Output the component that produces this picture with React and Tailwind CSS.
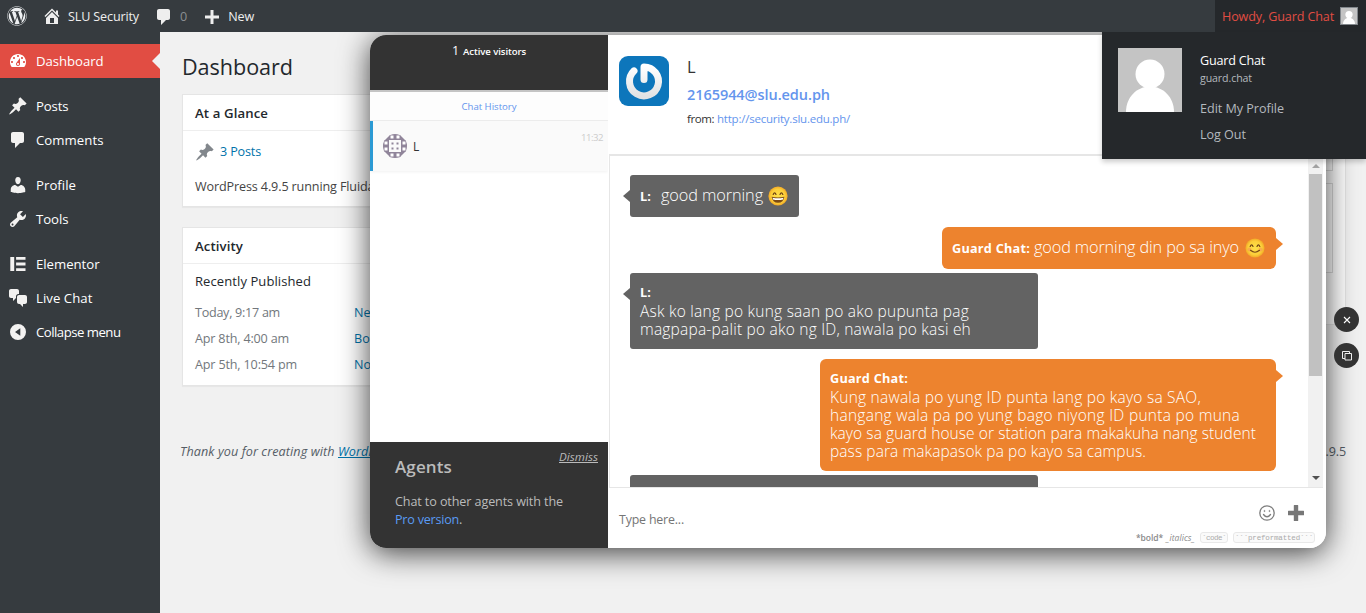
import { useLayoutEffect, useRef } from "react";
import { FaWordpress } from "react-icons/fa";

/* Text run set to a fixed advance width through tracking. */
function T({ w, className = "", children }) {
  const ref = useRef(null);
  useLayoutEffect(() => {
    const el = ref.current;
    el.style.letterSpacing = "0px";
    const natural = el.getBoundingClientRect().width;
    el.style.letterSpacing = (w - natural) / String(children).length + "px";
  }, [w, children]);
  return (
    <span ref={ref} className={"inline-block whitespace-pre " + className}>
      {children}
    </span>
  );
}

const paths = {
  dashboard:
    "M3.76 16h12.48c1.1-1.37 1.76-3.11 1.76-5 0-4.42-3.58-8-8-8s-8 3.58-8 8c0 1.89.66 3.63 1.76 5zM10 4c.55 0 1 .45 1 1s-.45 1-1 1-1-.45-1-1 .45-1 1-1zM6 6c.55 0 1 .45 1 1s-.45 1-1 1-1-.45-1-1 .45-1 1-1zm8 0c.55 0 1 .45 1 1s-.45 1-1 1-1-.45-1-1 .45-1 1-1zm-5.37 5.55L12 7v6c0 1.1-.9 2-2 2s-2-.9-2-2c0-.57.24-1.08.63-1.45zM4 10c.55 0 1 .45 1 1s-.45 1-1 1-1-.45-1-1 .45-1 1-1zm12 0c.55 0 1 .45 1 1s-.45 1-1 1-1-.45-1-1 .45-1 1-1zm-5 3c0-.55-.45-1-1-1s-1 .45-1 1 .45 1 1 1 1-.45 1-1z",
  pin: "M10.44 3.02l1.82-1.82 6.36 6.35-1.83 1.82c-1.05-.68-2.48-.57-3.41.36l-.75.75c-.92.93-1.04 2.35-.35 3.41l-1.83 1.82-2.41-2.41-2.8 2.79c-.42.42-3.38 2.71-3.8 2.29s1.86-3.39 2.28-3.81l2.79-2.79L4.1 9.36l1.83-1.82c1.05.69 2.48.57 3.4-.36l.75-.75c.93-.92 1.05-2.35.36-3.41z",
  comment:
    "M5 2h9c1.1 0 2 .9 2 2v7c0 1.1-.9 2-2 2h-2l-5 5v-5H5c-1.1 0-2-.9-2-2V4c0-1.1.9-2 2-2z",
  user: "M10 9.25c-2.27 0-2.73-3.44-2.73-3.44C7 4.02 7.82 2 9.97 2c2.16 0 2.98 2.02 2.71 3.81 0 0-.41 3.44-2.68 3.44zm0 2.57L12.72 10c2.39 0 4.52 2.33 4.52 4.53v2.49s-3.65 1.13-7.24 1.13c-3.65 0-7.24-1.13-7.24-1.13v-2.49c0-2.25 1.94-4.48 4.47-4.48z",
  wrench:
    "M16.68 9.77c-1.34 1.34-3.3 1.67-4.95.99l-5.41 6.52c-.99.99-2.59.99-3.58 0s-.99-2.59 0-3.57l6.52-5.42c-.68-1.65-.35-3.61.99-4.95 1.28-1.28 3.12-1.62 4.72-1.06l-2.89 2.89 2.82 2.82 2.86-2.87c.53 1.58.18 3.39-1.08 4.65zM3.81 16.21c.4.39 1.04.39 1.43 0 .4-.4.4-1.04 0-1.43-.39-.4-1.03-.4-1.43 0-.39.39-.39 1.03 0 1.43z",
  elementor: "M2.3 3h3.9v14H2.3zM8.1 3h9.4v2.8H8.1zM8.1 8.6h9.4v2.8H8.1zM8.1 14.2h9.4V17H8.1z",
  chat: "M11 6h-.82C9.07 6 8 7.2 8 8.16V10l-3 3v-3H3c-1.1 0-2-.9-2-2V3c0-1.1.9-2 2-2h6c1.1 0 2 .9 2 2v3zm0 1h6c1.1 0 2 .9 2 2v5c0 1.1-.9 2-2 2h-2v3l-3-3h-1c-1.1 0-2-.9-2-2V9c0-1.1.9-2 2-2z",
  collapse: "M10 2a8 8 0 1 0 0 16 8 8 0 0 0 0-16zM12.3 6.3v7.4L7 10z",
  home: "M16 8.5l1.53 1.53-1.06 1.06L10 4.6l-6.47 6.49-1.06-1.06L10 2.5l4 4v-2h2v4zm-6-2.46l6 5.99V18H4v-5.97zM12 17v-5H8v5h4z",
  plus: "M17 8.5v3h-5.5V17h-3v-5.5H3v-3h5.500V3h3v5.500z",
};

function Icon({ name, className = "" }) {
  return (
    <svg viewBox="0 0 20 20" className={"size-5 shrink-0 " + className} fill="currentColor" fillRule="evenodd">
      <path d={paths[name]} />
    </svg>
  );
}

function Person({ className }) {
  return (
    <svg viewBox="0 0 64 64" className={className}>
      <rect width="64" height="64" fill="#c4c4c4" />
      <circle cx="32" cy="26" r="14.500" fill="#fff" />
      <path d="M8 64C8 49 19 38.500 32 38.500S56 49 56 64z" fill="#fff" />
    </svg>
  );
}

function Emoji({ grin }) {
  return (
    <svg viewBox="0 0 20 20" className="size-5 shrink-0">
      <defs>
        <radialGradient id={grin ? "ga" : "gb"} cx="50%" cy="50%" r="55%">
          <stop offset="0" stopColor="#fde04a" />
          <stop offset=".65" stopColor="#fccf3a" />
          <stop offset="1" stopColor="#ee9a1f" />
        </radialGradient>
      </defs>
      <circle cx="10" cy="10" r="9.600" fill={grin ? "url(#ga)" : "url(#gb)"} />
      {!grin && <circle cx="4.500" cy="11.500" r="2" fill="#f58b5a" opacity=".5" />}
      {!grin && <circle cx="15.500" cy="11.500" r="2" fill="#f58b5a" opacity=".5" />}
      <path d="M5.200 8.500Q6.600 5.200 8 8.500M12 8.500Q13.400 5.200 14.800 8.500" fill="none" stroke="#6b3f14" strokeWidth="1.200" strokeLinecap="round" />
      {grin ? (
        <g>
          <path d="M3.600 10.800Q10 12 16.400 10.800Q15.500 16.800 10 16.800T3.600 10.800z" fill="#7a4a17" />
          <path d="M4.600 11.700Q10 12.800 15.400 11.700L15 13.500Q10 14.500 5 13.500z" fill="#fff" />
        </g>
      ) : (
        <path d="M5.500 12.300Q10 16.200 14.500 12.300" fill="none" stroke="#7a4a17" strokeWidth="1.200" strokeLinecap="round" />
      )}
    </svg>
  );
}

function MenuItem({ icon, label, w, active }) {
  return (
    <div className={"relative flex h-[34px] items-center pl-2 text-[13.200px] text-white " + (active ? "bg-[#e14d43]" : "")}>
      <Icon name={icon} className={active ? "" : "text-[#f3f2f1]"} />
      <T w={w} className="ml-2 leading-[18px]">{label}</T>
      {active && (
        <span className="absolute right-0 top-[9px] border-y-8 border-r-8 border-y-transparent border-r-[#f1f1f1]" />
      )}
    </div>
  );
}

function Sidebar() {
  return (
    <nav className="w-40 shrink-0 bg-[#363b3f] pt-3">
      <MenuItem icon="dashboard" label="Dashboard" w={67.5} active />
      <div className="h-[11px]" />
      <MenuItem icon="pin" label="Posts" w={32.500} />
      <MenuItem icon="comment" label="Comments" w={67.5} />
      <div className="h-[11px]" />
      <MenuItem icon="user" label="Profile" w={40} />
      <MenuItem icon="wrench" label="Tools" w={32.500} />
      <div className="h-[11px]" />
      <MenuItem icon="elementor" label="Elementor" w={63.5} />
      <MenuItem icon="chat" label="Live Chat" w={56.5} />
      <MenuItem icon="collapse" label="Collapse menu" w={84.5} />
    </nav>
  );
}

function AdminBar() {
  return (
    <header className="flex h-8 items-center bg-[#363b3f] text-[12.600px] text-[#eee]">
      <FaWordpress className="ml-[7px] size-5 text-[#eef0f2]" />
      <Icon name="home" className="ml-[15px]" />
      <T w={71} className="ml-[6px] mt-[2px]">SLU Security</T>
      <Icon name="comment" className="ml-[15px] mt-px" />
      <span className="ml-[6px] mt-[2px] text-[#8b8f92]">0</span>
      <Icon name="plus" className="ml-[15px] mt-px" />
      <T w={26} className="ml-[6px] mt-[2px]">New</T>
      <div className="ml-auto flex h-8 w-[151px] items-center bg-[#25282b] pl-[7px] text-[#e14d43]">
        <T w={112} className="mt-[2px]">Howdy, Guard Chat</T>
        <Person className="ml-[6px] size-[18px] border border-[#82878c]" />
      </div>
    </header>
  );
}

function UserMenu() {
  return (
    <div className="absolute right-0 top-8 z-20 flex h-[127px] w-[264px] bg-[#25282b] pl-4 pt-4 shadow-[0_3px_5px_rgba(0,0,0,0.2)]">
      <Person className="size-16" />
      <div className="ml-[18px] flex flex-col items-start text-[12.600px] text-[#b4b9be]">
        <T w={65} className="mt-[4px] leading-[18px] text-white">Guard Chat</T>
        <T w={52} className="text-[10.600px] leading-[17px]">guard.chat</T>
        <T w={84} className="mt-[9px] leading-[26px]">Edit My Profile</T>
        <T w={46} className="leading-[26px]">Log Out</T>
      </div>
    </div>
  );
}

function Panel({ title, w, children, className }) {
  return (
    <section className={"border border-[#e5e5e5] bg-white shadow-[0_1px_1px_rgba(0,0,0,0.04)] " + className}>
      <h2 className="flex h-9 items-center border-b border-[#eee] pl-3 pt-[2px] text-[13.200px] font-semibold text-[#23282d]">
        <T w={w}>{title}</T>
      </h2>
      {children}
    </section>
  );
}

const activity = [
  ["Today, 9:17 am", 85, "New"],
  ["Apr 8th, 4:00 am", 94, "Bomb"],
  ["Apr 5th, 10:54 pm", 102, "No"],
];

function Dashboard() {
  return (
    <main className="relative flex-1 bg-[#f1f1f1] pl-[20px] pr-5">
      <h1 className="pl-[2px] pt-[19px] text-[21.600px] leading-[32px] text-[#23282d]">
        <T w={111}>Dashboard</T>
      </h1>
      <div className="flex gap-4 pl-[2px] pt-[11px]">
        <div className="w-[560px] shrink-0">
          <Panel title="At a Glance" w={73} className="h-[113px]">
            <div className="flex items-center pt-[11px] text-[12.600px] text-[#0073aa]">
              <Icon name="pin" className="ml-[12px] text-[#82878c]" />
              <T w={41} className="ml-[5px]">3 Posts</T>
            </div>
            <p className="pl-3 pt-[15px] text-[12.600px] leading-[20px] text-[#444]">
              <T w={220}>WordPress 4.9.5 running Fluida theme</T>
            </p>
          </Panel>
          <Panel title="Activity" w={48} className="mt-5 h-[159px]">
            <h3 className="pl-3 pt-[7px] text-[13px] leading-[20px] text-[#23282d]">
              <T w={116}>Recently Published</T>
            </h3>
            <div className="pl-3 pt-[9px] text-[12.600px] leading-[26px]">
              {activity.map(([when, w, title]) => (
                <div key={when} className="flex">
                  <span className="w-[159px] text-[#72777c]">
                    <T w={w}>{when}</T>
                  </span>
                  <span className="text-[#0073aa]">{title}</span>
                </div>
              ))}
            </div>
          </Panel>
        </div>
        <section className="h-[231px] flex-1 border border-[#e5e5e5] bg-white pr-3 pt-9">
          <div className="h-[40px] rounded-none border border-[#ddd]" />
          <div className="mt-[12px] h-[90px] border border-[#ddd]" />
        </section>
      </div>
      <footer className="absolute inset-x-5 top-[410px] flex justify-between text-[12.600px] leading-5 text-[#555d66]">
        <span className="italic">
          <T w={158}>Thank you for creating with </T>
          <T w={63} className="text-[#0073aa] underline">WordPress.</T>
        </span>
        <T w={74}>Version 4.9.5</T>
      </footer>
    </main>
  );
}

function Identicon() {
  const tiles = [[9, 1], [15, 1], [9, 19], [15, 19], [1, 9], [1, 15], [19, 9], [19, 15]];
  const dots = [[9, 9], [14, 9], [9, 14], [14, 14]];
  return (
    <svg viewBox="0 0 24 24" className="size-6 shrink-0">
      <defs>
        <clipPath id="round"><circle cx="12" cy="12" r="12" /></clipPath>
      </defs>
      <g clipPath="url(#round)" fill="#90859a">
        <path d="M6 0h12v6H6zM6 18h12v6H6zM0 6h6v12H0zM18 6h6v12h-6z" />
        <path d="M2 6l4-4v4zM18 2l4 4h-4zM2 18h4v4zM18 18h4l-4 4z" />
        <g fill="#fff">
          {tiles.map(([x, y]) => (
            <rect key={x + "-" + y} x={x > 1 && x < 19 ? x - 1.500 : x + 0.500} y={y > 1 && y < 19 ? y - 1.500 : y + 0.500} width="3" height="3" />
          ))}
        </g>
        {dots.map(([x, y]) => (
          <rect key={x + "." + y} x={x - 0.500} y={y - 0.500} width="2" height="2" />
        ))}
      </g>
    </svg>
  );
}

function VisitorList() {
  return (
    <aside className="flex w-[238px] shrink-0 flex-col bg-white">
      <div className="flex h-[55px] items-baseline justify-center gap-1 bg-[#333] pt-[7px] text-white">
        <span className="text-[12.500px]">1</span>
        <T w={63} className="text-[9.600px] font-semibold">Active visitors</T>
      </div>
      <div className="h-[2px] bg-[#c4c4c4]" />
      <div className="flex h-[29px] items-center justify-center border-b border-[#eee] bg-[#fdfdfd] pt-[2px] text-[9.600px] text-[#6495ed]">
        <T w={55}>Chat History</T>
      </div>
      <div className="flex h-[50px] items-center border-l-[3px] border-[#2b9ad4] bg-[#fafafa] pr-[5px] shadow-[0_1px_3px_rgba(0,0,0,0.06)]">
        <span className="ml-[10px] flex"><Identicon /></span>
        <span className="ml-[6px] mt-[2px] text-[12px] text-[#333]">L</span>
        <T w={22} className="-mt-[16px] ml-auto text-[9.600px] text-[#ccc]">11:32</T>
      </div>
      <div className="flex-1" />
      <div className="relative h-[106px] bg-[#333] pl-[25px] pt-[14px] text-[#bbb]">
        <h4 className="text-[17px] font-semibold leading-[22px]">
          <T w={57}>Agents</T>
        </h4>
        <div className="absolute right-[10px] top-[6px] text-[11.600px] italic leading-[18px]">
          <T w={39} className="underline">Dismiss</T>
        </div>
        <p className="mt-[15px] text-[12.600px] leading-[18px]">
          <T w={168}>Chat to other agents with the</T>
          <br />
          <T w={64} className="text-[#5a9bf5]">Pro version</T>.
        </p>
      </div>
    </aside>
  );
}

function Gravatar() {
  return (
    <svg viewBox="0 0 50 50" className="size-[50px] shrink-0 rounded-[9px] bg-[#0d76bb]">
      <defs>
        <linearGradient id="ring" x1="0" y1="0" x2="0" y2="1">
          <stop offset="0" stopColor="#fff" />
          <stop offset="1" stopColor="#e2e3e4" />
        </linearGradient>
      </defs>
      <path d="M25 23V10.500A14.500 14.500 0 1 1 15 14.500" transform="translate(0 .4)" fill="none" stroke="url(#ring)" strokeWidth="7" strokeLinecap="round" strokeLinejoin="round" />
    </svg>
  );
}

function Bubble({ mine, inline, name, nameW, lines, className, grin }) {
  return (
    <div
      className={
        "relative shrink-0 p-2.5 font-light leading-[18px] text-white " +
        (inline ? "text-[16.300px] " : "text-[15.500px] ") +
        (mine ? "self-end rounded-[6px] bg-[#ed832e] " : "self-start rounded-[3px] bg-[#636363] ") +
        className
      }
    >
      <span
        className={
          "absolute border-y-[6px] border-y-transparent " +
          (mine ? "-right-[7px] top-[11px] border-l-[7px] border-l-[#ed832e]" : "-left-[7px] top-[15px] border-r-[7px] border-r-[#636363]")
        }
      />
      {inline ? (
        <div className="flex items-center pt-px">
          <T w={nameW} className="text-[12.700px] font-bold">{name}</T>
          <T w={lines[0][1]} className={"-mt-[3px] " + (mine ? "ml-[4px]" : "ml-[10px]")}>{lines[0][0]}</T>
          <span className={mine ? "ml-[6px]" : "ml-[5px]"}><Emoji grin={grin} /></span>
        </div>
      ) : (
        <div className="flex flex-col items-start">
          <T w={nameW} className="h-[19px] text-[12.700px] font-bold leading-[19px]">{name}</T>
          {lines.map(([text, w]) => <T key={text} w={w}>{text}</T>)}
        </div>
      )}
    </div>
  );
}

function Scrollbar() {
  return (
    <div className="flex w-[15px] shrink-0 flex-col items-center bg-[#f1f1f1] pb-[7px] pt-[8px]">
      <span className="border-x-[4px] border-b-[4px] border-x-transparent border-b-[#a3a3a3]" />
      <span className="mt-[6px] h-[202px] w-[13px] bg-[#c1c1c1]" />
      <span className="mt-auto border-x-[4px] border-t-[4px] border-x-transparent border-t-[#505050]" />
    </div>
  );
}

function Conversation() {
  return (
    <section className="flex min-w-0 flex-1 flex-col bg-white">
      <div className="flex h-[119px] shrink-0 pl-[11px] pt-[21px]">
        <Gravatar />
        <div className="ml-[18px] flex flex-col items-start text-[#333]">
          <span className="text-[16.500px] font-medium leading-[22px]">L</span>
          <T w={143} className="mt-[6px] text-[14.500px] font-semibold leading-[22px] text-[#6495ed]">2165944@slu.edu.ph</T>
          <div className="mt-[4px] flex text-[11.500px] leading-[18px]">
            <T w={27}>from:</T>
            <T w={133} className="ml-[3px] text-[#6495ed]">http://security.slu.edu.ph/</T>
          </div>
        </div>
      </div>
      <div className="ml-px mr-[3px] flex h-[334px] shrink-0 overflow-hidden border-b border-l border-t-2 border-[#e6e6e6]">
        <div className="flex min-w-0 flex-1 flex-col pl-5 pr-8 pt-[19px]">
          <Bubble inline grin name="L:" nameW={11} lines={[["good morning", 102]]} className="h-[42px] w-[169px]" />
          <Bubble mine inline name="Guard Chat:" nameW={78} lines={[["good morning din po sa inyo", 205]]} className="mt-[10px] h-[42px] w-[334px]" />
          <Bubble
            name="L:"
            nameW={11}
            className="mt-1 h-[76px] w-[408px]"
            lines={[
              ["Ask ko lang po kung saan po ako pupunta pag", 329],
              ["magpapa-palit po ako ng ID, nawala po kasi eh", 331],
            ]}
          />
          <Bubble
            mine
            name="Guard Chat:"
            nameW={78}
            className="mt-2.5 h-[112px] w-[456px]"
            lines={[
              ["Kung nawala po yung ID punta lang po kayo sa SAO,", 371],
              ["hangang wala pa po yung bago niyong ID punta po muna", 410],
              ["kayo sa guard house or station para makakuha nang student", 426],
              ["pass para makapasok pa po kayo sa campus.", 316],
            ]}
          />
          <div className="mt-1 h-10 w-[408px] shrink-0 rounded-[3px] bg-[#636363]" />
        </div>
        <Scrollbar />
      </div>
      <div className="flex flex-1 flex-col">
        <div className="flex h-[44px] items-start pl-[11px] pr-[22px] pt-[17px]">
          <T w={65} className="mt-[6px] text-[12.400px] leading-[18px] text-[#757575]">Type here...</T>
          <svg viewBox="0 0 16 16" className="ml-auto size-4" fill="none" stroke="#7d7d7d" strokeWidth="1.300">
            <circle cx="8" cy="8" r="7.200" />
            <circle cx="5.500" cy="6" r=".6" fill="#7d7d7d" strokeWidth=".6" />
            <circle cx="10.500" cy="6" r=".6" fill="#7d7d7d" strokeWidth=".6" />
            <path d="M4.500 9.500Q8 14 11.500 9.500" strokeLinecap="round" />
          </svg>
          <svg viewBox="0 0 16 16" className="ml-[13px] size-4" fill="#777">
            <path d="M6.300 0h3.400q.5 0 .5.5V5.800h5.300q.5 0 .5.500v3.400q0 .5-.5.500h-5.300v5.300q0 .5-.5.500H6.300q-.5 0-.5-.5V10.200H.5q-.5 0-.5-.5V6.300q0-.5.5-.5h5.300V.5q0-.5.500-.5z" />
          </svg>
        </div>
        <div className="flex items-center justify-end pr-[11px] text-[8.500px] leading-[10px] text-[#8a8a8a]">
          <T w={27} className="font-semibold">*bold*</T>
          <T w={29} className="ml-[3px] italic">_italics_</T>
          <span className="ml-[5px] flex h-[11px] w-7 items-center justify-center rounded-[3px] border border-[#e8e8e8] bg-[#fafafa] font-['Liberation_Mono',monospace] text-[7.500px] text-[#aaa]">
            <T w={24}>`code`</T>
          </span>
          <span className="ml-[5px] flex h-[11px] w-[82px] items-center justify-center rounded-[3px] border border-[#e8e8e8] bg-[#fafafa] font-['Liberation_Mono',monospace] text-[7.500px] text-[#aaa]">
            <T w={78}>```preformatted```</T>
          </span>
        </div>
      </div>
    </section>
  );
}

function WindowButtons() {
  return (
    <div className="absolute left-[1334px] top-[307px] flex flex-col gap-[11px]">
      <span className="flex size-[25px] items-center justify-center rounded-full bg-[#333]">
        <svg viewBox="0 0 8 8" className="size-2" stroke="#fff" strokeWidth="1.100"><path d="M1 1l6 6M7 1L1 7" /></svg>
      </span>
      <span className="flex size-[25px] items-center justify-center rounded-full bg-[#333]">
        <svg viewBox="0 0 10 10" className="size-2.5" fill="none" stroke="#eee" strokeWidth="1"><path d="M3 2.500h6.500v6.500H3zM7.500 2.500V.5H.5v7H3" /></svg>
      </span>
    </div>
  );
}

export default function App() {
  return (
    <div className="relative flex h-[613px] w-[1366px] flex-col overflow-hidden bg-[#f1f1f1] font-['Open_Sans','Noto_Sans',sans-serif]">
      <div className="relative z-10"><AdminBar /></div>
      <div className="flex flex-1">
        <Sidebar />
        <Dashboard />
      </div>
      <div className="absolute left-[370px] top-[35px] h-[513px] w-[956px] rounded-[16px] shadow-[0_5px_30px_rgba(0,0,0,0.75)]">
        <div className="flex h-full overflow-hidden rounded-[16px]">
          <VisitorList />
          <Conversation />
        </div>
      </div>
      <WindowButtons />
      <UserMenu />
    </div>
  );
}
